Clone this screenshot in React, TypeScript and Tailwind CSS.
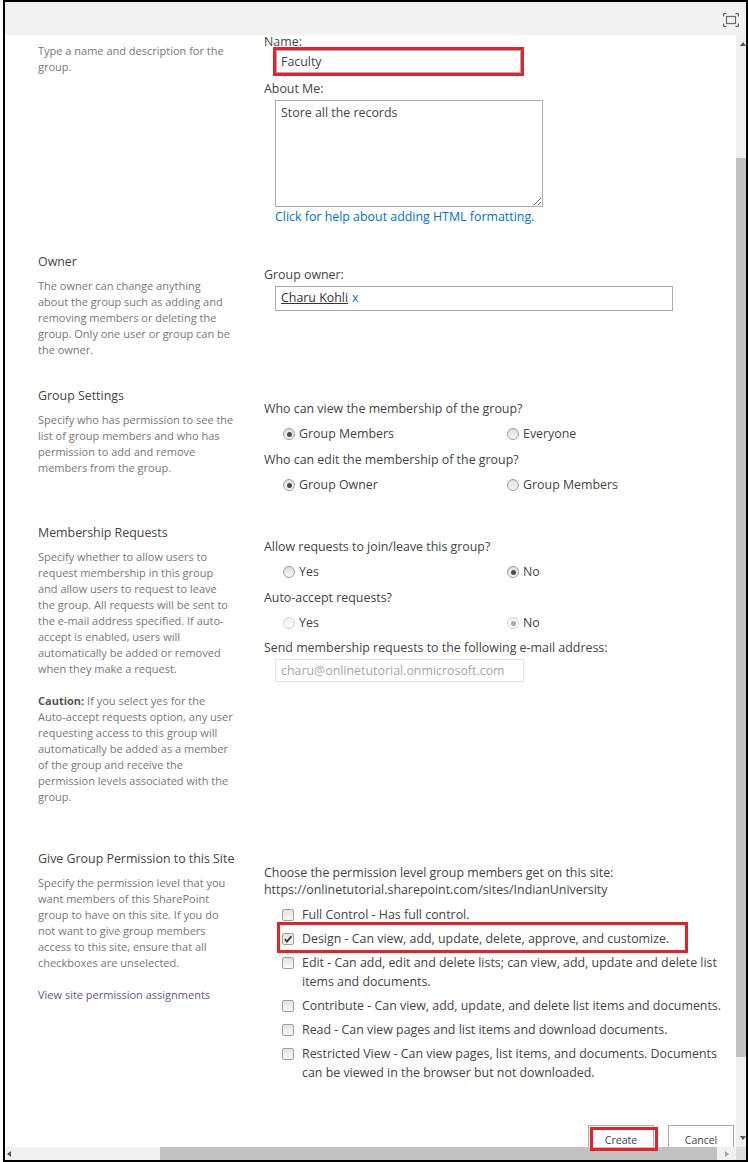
import clsx from "clsx";
import type { ReactNode } from "react";

const label = "text-[12.4px] leading-[16px] text-[#444]";
const heading = "mt-[4px] text-[12.4px] leading-[16px] text-[#444]";
const desc = "text-[11px] leading-[16px] text-[#777]";

const Lines = ({ lines }: { lines: ReactNode[] }) => (
    <div className={clsx(desc, "whitespace-nowrap")}>
        {lines.map((l, i) => (
            <div key={i}>{l}</div>
        ))}
    </div>
);

const Radio = ({ checked, disabled, text }: { checked?: boolean; disabled?: boolean; text: string }) => (
    <div className="flex w-[224px] items-center">
        <span
            className={clsx(
                "flex h-[12px] w-[12px] shrink-0 items-center justify-center rounded-full border bg-linear-to-b",
                disabled ? "border-[#d2d2d2] from-[#f3f3f3] to-[#fbfbfb]" : "border-[#9d9d9d] from-[#dedede] to-[#f8f8f8]"
            )}
        >
            {checked && (
                <span className={clsx("h-[5px] w-[5px] rounded-full", disabled ? "bg-[#a9a9a9]" : "bg-[#4b4b4b]")} />
            )}
        </span>
        <span className="ml-[4px]">{text}</span>
    </div>
);

const Check = ({ checked, children }: { checked?: boolean; children: ReactNode }) => (
    <div className="flex items-start pl-[18px]">
        <div className="flex h-[19px] items-center">
            <span className="flex h-[12px] w-[12px] items-center justify-center rounded-[2px] border border-[#a0a0a0] bg-linear-to-b from-[#e2e2e2] to-[#f9f9f9]">
                {checked && (
                    <svg width="10" height="10" viewBox="0 0 10 10">
                        <path d="M1.8 5.2 L4 7.6 L8.4 2.2" fill="none" stroke="#333" strokeWidth="1.8" />
                    </svg>
                )}
            </span>
        </div>
        <div className="ml-[8px] w-[425px] text-[12.4px] leading-[19px] text-[#444]">{children}</div>
    </div>
);

const ExpandIcon = () => (
    <svg width="16" height="14" viewBox="0 0 16 14" fill="none" stroke="#6b6b6b" strokeWidth="1.2">
        <path d="M0.6 3.5 V0.6 H3.5 M12.5 0.6 H15.4 V3.5 M15.4 10.5 V13.4 H12.5 M3.5 13.4 H0.6 V10.5" />
        <rect x="3.5" y="3.5" width="9" height="7" />
    </svg>
);

const VScroll = () => (
    <div className="flex w-[10px] shrink-0 flex-col">
        <div className="flex h-[18px] items-center justify-center bg-[#f0f0f0] pl-[3px]">
            <span className="h-0 w-0 border-x-[3px] border-b-[4px] border-x-transparent border-b-[#555]" />
        </div>
        <div className="h-[105px] bg-[#f0f0f0]" />
        <div className="h-[899px] bg-[#c1c1c1]" />
        <div className="flex-1 bg-[#f0f0f0]" />
        <div className="flex h-[18px] items-center justify-center bg-[#f0f0f0] pl-[3px]">
            <span className="h-0 w-0 border-x-[3px] border-t-[4px] border-x-transparent border-t-[#555]" />
        </div>
        <div className="h-[13px] bg-[#dcdcdc]" />
    </div>
);

const HScroll = () => (
    <div className="flex h-[13px] shrink-0 bg-[#f0f0f0]">
        <div className="flex w-[155px] items-center pl-[2px]">
            <span className="h-0 w-0 border-y-[3.5px] border-r-[4px] border-y-transparent border-r-[#555]" />
        </div>
        <div className="w-[557px] bg-[#c1c1c1]" />
        <div className="flex flex-1 items-center justify-center">
            <span className="h-0 w-0 border-y-[3.5px] border-l-[4px] border-y-transparent border-l-[#a6a6a6]" />
        </div>
    </div>
);

export default function App() {
    return (
        <div className="relative h-[1162px] w-[748px] overflow-hidden bg-white font-['Open_Sans',Arial,sans-serif] text-[#444]">
            <div className="ml-[3px] flex h-[1162px] w-[745px] flex-col border-2 border-black">
                <div className="flex h-[33px] shrink-0 justify-end bg-[#f2f2f2] pr-[7px] pt-[11px]">
                    <ExpandIcon />
                </div>

                <div className="flex min-h-0 flex-1">
                    <div className="flex min-w-0 flex-1 flex-col">
                        <div className="min-h-0 flex-1 overflow-hidden">
                            {/* Name and description */}
                            <div className="flex h-[215px]">
                                <div className="w-[259px] shrink-0 pl-[33px] pt-[8px]">
                                    <Lines lines={["Type a name and description for the", "group."]} />
                                </div>
                                <div className="flex-1">
                                    <div className="mt-[1px] text-[12.4px] leading-[11px] text-[#444]">Name:</div>
                                    <input
                                        readOnly
                                        defaultValue="Faculty"
                                        className="ml-[12px] mt-[3px] block h-[23px] w-[245px] border border-[#ababab] px-[4px] text-[12.4px] text-[#444] outline-3 outline-[#e8202a]"
                                    />
                                    <div className={clsx(label, "mt-[8px]")}>About Me:</div>
                                    <textarea
                                        readOnly
                                        defaultValue="Store all the records"
                                        className="ml-[11px] mt-[3px] block h-[107px] w-[268px] border border-[#ababab] px-[5px] pt-[4px] text-[12.4px] leading-[16px] text-[#444] outline-none"
                                    />
                                    <div className="ml-[11px] mt-[2px] text-[12.4px] leading-[16px] text-[#0072c6]">
                                        Click for help about adding HTML formatting.
                                    </div>
                                </div>
                            </div>

                            {/* Owner */}
                            <div className="flex h-[134px]">
                                <div className="w-[259px] shrink-0 pl-[33px]">
                                    <div className={heading}>Owner</div>
                                    <div className="mt-[8px]">
                                        <Lines
                                            lines={[
                                                "The owner can change anything",
                                                "about the group such as adding and",
                                                "removing members or deleting the",
                                                "group. Only one user or group can be",
                                                "the owner.",
                                            ]}
                                        />
                                    </div>
                                </div>
                                <div className="flex-1">
                                    <div className={clsx(label, "mt-[17px]")}>Group owner:</div>
                                    <div className="ml-[11px] mt-[3px] flex h-[25px] w-[398px] items-center border border-[#ababab] px-[5px] text-[12.4px]">
                                        <span className="text-[#333] underline decoration-[#333]">Charu Kohli</span>
                                        <span className="ml-[4px] text-[#0072c6]">x</span>
                                    </div>
                                </div>
                            </div>

                            {/* Group settings */}
                            <div className="flex h-[137px]">
                                <div className="w-[259px] shrink-0 pl-[33px]">
                                    <div className={heading}>Group Settings</div>
                                    <div className="mt-[8px]">
                                        <Lines
                                            lines={[
                                                "Specify who has permission to see the",
                                                "list of group members and who has",
                                                "permission to add and remove",
                                                "members from the group.",
                                            ]}
                                        />
                                    </div>
                                </div>
                                <div className={clsx("flex-1", label)}>
                                    <div className="mt-[17px]">Who can view the membership of the group?</div>
                                    <div className="mt-[9px] flex pl-[19px]">
                                        <Radio checked text="Group Members" />
                                        <Radio text="Everyone" />
                                    </div>
                                    <div className="mt-[10px]">Who can edit the membership of the group?</div>
                                    <div className="mt-[9px] flex pl-[19px]">
                                        <Radio checked text="Group Owner" />
                                        <Radio text="Group Members" />
                                    </div>
                                </div>
                            </div>

                            {/* Membership requests */}
                            <div className="flex h-[326px]">
                                <div className="w-[259px] shrink-0 pl-[33px]">
                                    <div className={heading}>Membership Requests</div>
                                    <div className="mt-[8px]">
                                        <Lines
                                            lines={[
                                                "Specify whether to allow users to",
                                                "request membership in this group",
                                                "and allow users to request to leave",
                                                "the group. All requests will be sent to",
                                                "the e-mail address specified. If auto-",
                                                "accept is enabled, users will",
                                                "automatically be added or removed",
                                                "when they make a request.",
                                            ]}
                                        />
                                    </div>
                                    <div className="mt-[16px]">
                                        <Lines
                                            lines={[
                                                <>
                                                    <b className="font-bold text-[#555]">Caution:</b> If you select yes for the
                                                </>,
                                                "Auto-accept requests option, any user",
                                                "requesting access to this group will",
                                                "automatically be added as a member",
                                                "of the group and receive the",
                                                "permission levels associated with the",
                                                "group.",
                                            ]}
                                        />
                                    </div>
                                </div>
                                <div className={clsx("flex-1", label)}>
                                    <div className="mt-[18px]">Allow requests to join/leave this group?</div>
                                    <div className="mt-[9px] flex pl-[19px]">
                                        <Radio text="Yes" />
                                        <Radio checked text="No" />
                                    </div>
                                    <div className="mt-[10px]">Auto-accept requests?</div>
                                    <div className="mt-[9px] flex pl-[19px]">
                                        <Radio disabled text="Yes" />
                                        <Radio disabled checked text="No" />
                                    </div>
                                    <div className="mt-[9px]">Send membership requests to the following e-mail address:</div>
                                    <div className="ml-[11px] mt-[3px] flex h-[23px] w-[249px] items-center border border-[#e1e1e1] px-[5px] text-[#a6a6a6]">
                                        charu@onlinetutorial.onmicrosoft.com
                                    </div>
                                </div>
                            </div>

                            {/* Site permission */}
                            <div className="flex h-[278px]">
                                <div className="w-[259px] shrink-0 pl-[33px]">
                                    <div className={heading}>Give Group Permission to this Site</div>
                                    <div className="mt-[8px]">
                                        <Lines
                                            lines={[
                                                "Specify the permission level that you",
                                                "want members of this SharePoint",
                                                "group to have on this site. If you do",
                                                "not want to give group members",
                                                "access to this site, ensure that all",
                                                "checkboxes are unselected.",
                                            ]}
                                        />
                                    </div>
                                    <div className="mt-[16px] text-[11px] leading-[16px] text-[#6d4f98]">
                                        View site permission assignments
                                    </div>
                                </div>
                                <div className="flex-1">
                                    <div className="mt-[17px] text-[12.4px] leading-[17px] text-[#444]">
                                        Choose the permission level group members get on this site:
                                        <br />
                                        https://onlinetutorial.sharepoint.com/sites/IndianUniversity
                                    </div>
                                    <div className="mt-[7px] flex flex-col gap-[5px]">
                                        <Check>Full Control - Has full control.</Check>
                                        <div className="relative">
                                            <Check checked>Design - Can view, add, update, delete, approve, and customize.</Check>
                                            <span className="pointer-events-none absolute -top-[7px] left-[13px] h-[31px] w-[411px] border-[3px] border-[#e8202a]" />
                                        </div>
                                        <Check>
                                            Edit - Can add, edit and delete lists; can view, add, update and delete list items and
                                            documents.
                                        </Check>
                                        <Check>Contribute - Can view, add, update, and delete list items and documents.</Check>
                                        <Check>Read - Can view pages and list items and download documents.</Check>
                                        <Check>
                                            Restricted View - Can view pages, list items, and documents. Documents can be viewed in
                                            the browser but not downloaded.
                                        </Check>
                                    </div>
                                </div>
                            </div>

                            {/* Buttons */}
                            <div className="flex justify-end gap-[14px] pr-[2px]">
                                <button className="flex h-[32px] w-[66px] items-center justify-center border border-[#ababab] bg-[#fdfdfd] text-[10.5px] text-[#444]">
                                    Create
                                </button>
                                <button className="flex h-[32px] w-[66px] items-center justify-center border border-[#ababab] bg-[#fdfdfd] text-[10.5px] text-[#444]">
                                    Cancel
                                </button>
                            </div>
                        </div>
                        <HScroll />
                    </div>
                    <VScroll />
                </div>
            </div>

            {/* Create button highlight */}
            <span className="pointer-events-none absolute left-[590px] top-[1127px] h-[24px] w-[68px] border-[3px] border-[#e8202a]" />
        </div>
    );
}
